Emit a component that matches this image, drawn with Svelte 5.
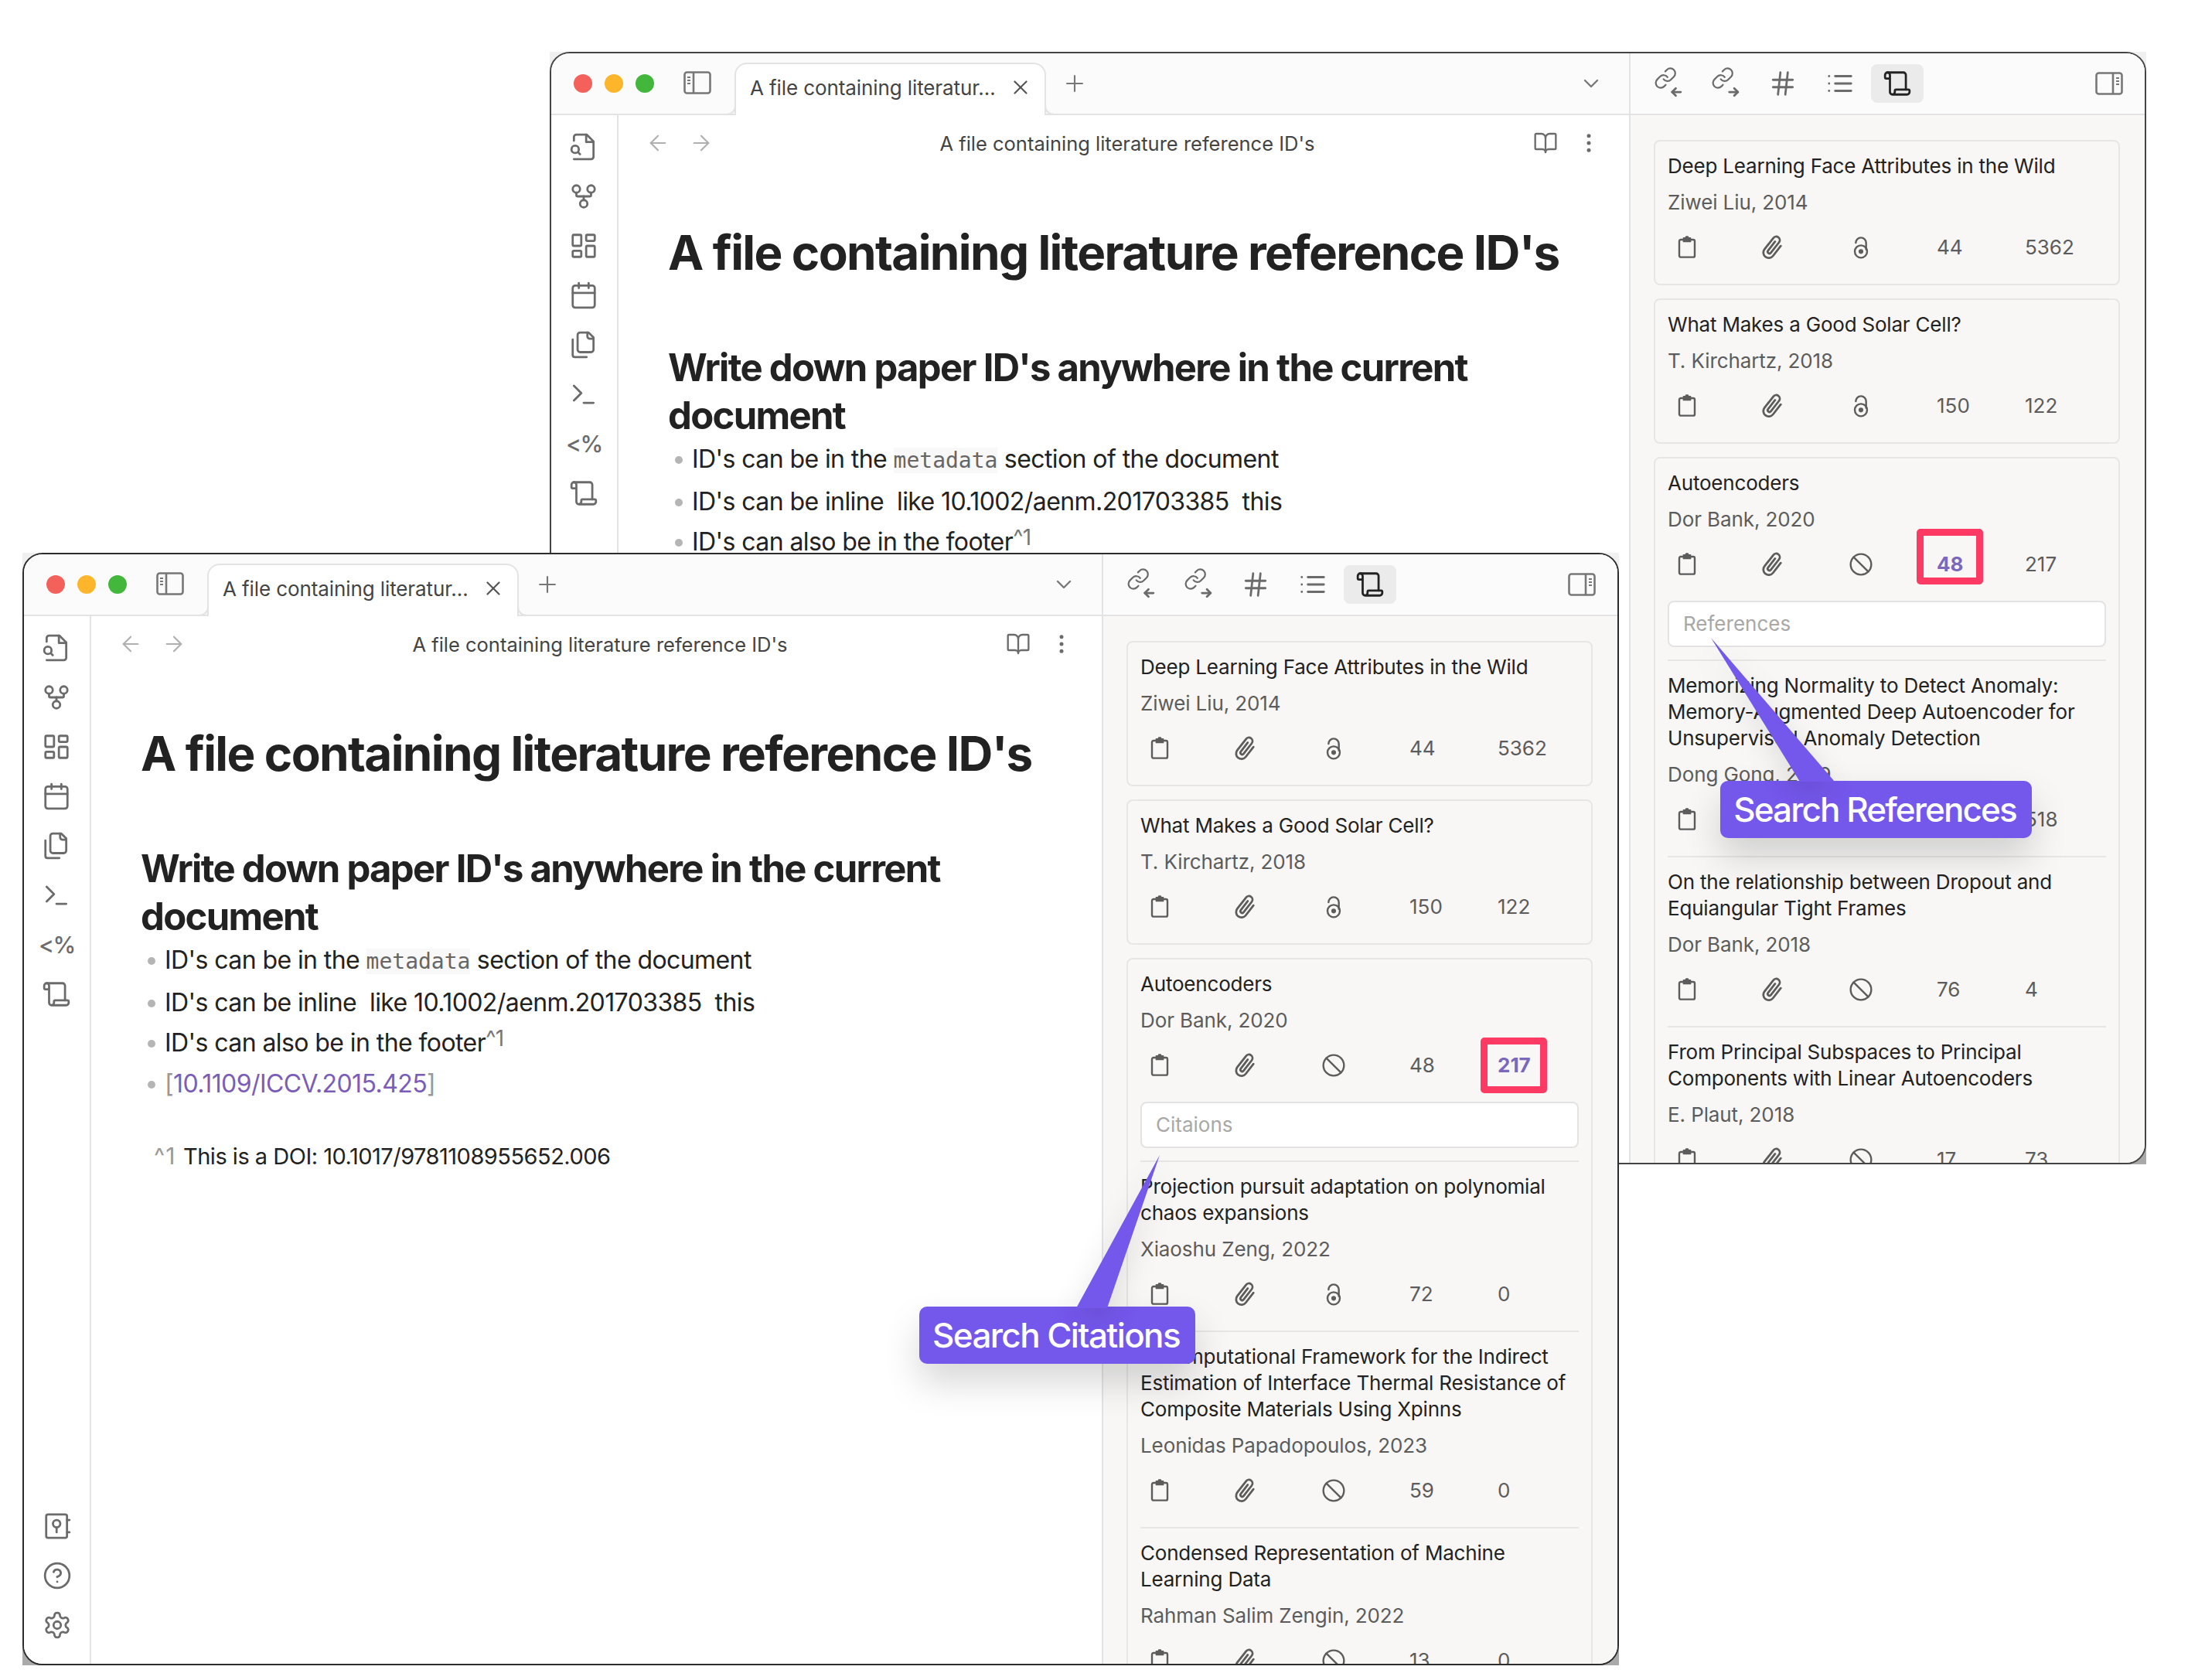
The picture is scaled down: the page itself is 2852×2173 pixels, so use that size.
<script>
  const icons = {
    fileSearch: '<path d="M4 22h14a2 2 0 0 0 2-2V7.5L14.5 2H6a2 2 0 0 0-2 2v3"/><polyline points="14 2 14 8 20 8"/><path d="m9 18-1.5-1.5"/><circle cx="5" cy="14" r="3"/>',
    fork: '<circle cx="12" cy="18" r="3"/><circle cx="6" cy="6" r="3"/><circle cx="18" cy="6" r="3"/><path d="M18 9v2c0 .6-.4 1-1 1H7c-.6 0-1-.4-1-1V9"/><path d="M12 12v3"/>',
    dash: '<rect width="7" height="9" x="3" y="3" rx="1"/><rect width="7" height="5" x="14" y="3" rx="1"/><rect width="7" height="9" x="14" y="12" rx="1"/><rect width="7" height="5" x="3" y="16" rx="1"/>',
    calendar: '<path d="M8 2v4"/><path d="M16 2v4"/><rect width="18" height="18" x="3" y="4" rx="2"/><path d="M3 10h18"/>',
    files: '<path d="M20 7h-3a2 2 0 0 1-2-2V2"/><path d="M9 18a2 2 0 0 1-2-2V4a2 2 0 0 1 2-2h7l4 4v10a2 2 0 0 1-2 2Z"/><path d="M3 7.6v12.8A1.6 1.6 0 0 0 4.6 22h9.8"/>',
    terminal: '<polyline points="4 17 10 11 4 5"/><line x1="12" x2="20" y1="19" y2="19"/>',
    scroll: '<path d="M19 17V5a2 2 0 0 0-2-2H4"/><path d="M8 21h12a2 2 0 0 0 2-2v-1a1 1 0 0 0-1-1H11a1 1 0 0 0-1 1v1a2 2 0 1 1-4 0V5a2 2 0 1 0-4 0v2a1 1 0 0 0 1 1h3"/>',
    vault: '<rect x="3" y="2.5" width="17" height="19" rx="1.5"/><circle cx="11.5" cy="10" r="3"/><path d="M11.5 13v4"/><path d="M20 7h2"/><path d="M20 17h2"/>',
    help: '<circle cx="12" cy="12" r="10"/><path d="M9.09 9a3 3 0 0 1 5.83 1c0 2-3 3-3 3"/><path d="M12 17h.01"/>',
    gear: '<path d="M12.22 2h-.44a2 2 0 0 0-2 2v.18a2 2 0 0 1-1 1.73l-.43.25a2 2 0 0 1-2 0l-.15-.08a2 2 0 0 0-2.73.73l-.22.38a2 2 0 0 0 .73 2.73l.15.1a2 2 0 0 1 1 1.72v.51a2 2 0 0 1-1 1.74l-.15.09a2 2 0 0 0-.73 2.73l.22.38a2 2 0 0 0 2.73.73l.15-.08a2 2 0 0 1 2 0l.43.25a2 2 0 0 1 1 1.73V20a2 2 0 0 0 2 2h.44a2 2 0 0 0 2-2v-.18a2 2 0 0 1 1-1.73l.43-.25a2 2 0 0 1 2 0l.15.08a2 2 0 0 0 2.73-.73l.22-.39a2 2 0 0 0-.73-2.73l-.15-.08a2 2 0 0 1-1-1.74v-.5a2 2 0 0 1 1-1.74l.15-.09a2 2 0 0 0 .73-2.73l-.22-.38a2 2 0 0 0-2.73-.73l-.15.08a2 2 0 0 1-2 0l-.43-.25a2 2 0 0 1-1-1.73V4a2 2 0 0 0-2-2z"/><circle cx="12" cy="12" r="3"/>',
    left: '<path d="M19 12H5"/><path d="m12 19-7-7 7-7"/>',
    right: '<path d="M5 12h14"/><path d="m12 5 7 7-7 7"/>',
    book: '<path d="M12 7v14"/><path d="M3 18a1 1 0 0 1-1-1V4a1 1 0 0 1 1-1h5a4 4 0 0 1 4 4 4 4 0 0 1 4-4h5a1 1 0 0 1 1 1v13a1 1 0 0 1-1 1h-6a3 3 0 0 0-3 3 3 3 0 0 0-3-3z"/>',
    dots: '<circle cx="12" cy="5" r="1"/><circle cx="12" cy="12" r="1"/><circle cx="12" cy="19" r="1"/>',
    x: '<path d="M18 6 6 18"/><path d="m6 6 12 12"/>',
    plus: '<path d="M5 12h14"/><path d="M12 5v14"/>',
    chevron: '<path d="m6 9 6 6 6-6"/>',
    hash: '<line x1="4" x2="20" y1="9" y2="9"/><line x1="4" x2="20" y1="15" y2="15"/><line x1="10" x2="8" y1="3" y2="21"/><line x1="16" x2="14" y1="3" y2="21"/>',
    list: '<line x1="8" y1="6" x2="21" y2="6"/><line x1="8" y1="12" x2="21" y2="12"/><line x1="8" y1="18" x2="21" y2="18"/><line x1="3" y1="6" x2="3.01" y2="6"/><line x1="3" y1="12" x2="3.01" y2="12"/><line x1="3" y1="18" x2="3.01" y2="18"/>',
    linkIn: '<g transform="translate(0 -2) scale(.8)"><path d="M10 13a5 5 0 0 0 7.54.54l3-3a5 5 0 0 0-7.07-7.07l-1.72 1.71"/><path d="M14 11a5 5 0 0 0-7.54-.54l-3 3a5 5 0 0 0 7.07 7.07l1.71-1.71"/></g><path d="M22 19h-7"/><path d="m18 16-3 3 3 3"/>',
    linkOut: '<g transform="translate(0 -2) scale(.8)"><path d="M10 13a5 5 0 0 0 7.54.54l3-3a5 5 0 0 0-7.07-7.07l-1.72 1.71"/><path d="M14 11a5 5 0 0 0-7.54-.54l-3 3a5 5 0 0 0 7.07 7.07l1.71-1.71"/></g><path d="M15 19h7"/><path d="m19 16 3 3-3 3"/>',
    clip: '<rect x="4.5" y="4.5" width="15" height="17" rx="1.5"/><path d="M8.5 2.8h2l.5-1.3h2l.5 1.3h2v3.7h-7z" fill="currentColor" stroke-width="1"/>',
    paper: '<g transform="rotate(38 12 12) translate(12 12) scale(1.16) translate(-12 -12)"><path d="M16.5 7v10.5a4.5 4.5 0 0 1-9 0V5.5a3 3 0 0 1 6 0v11a1.5 1.5 0 0 1-3 0V7"/></g>',
    oa: '<circle cx="12" cy="16" r="6"/><circle cx="12" cy="16" r="1.4" fill="currentColor"/><path d="M7 7.5a5 5 0 0 1 10 0V14"/>',
    ban: '<circle cx="12" cy="12" r="10"/><path d="m4.9 4.9 14.2 14.2"/>'
  };

  const ribbon = ['fileSearch', 'fork', 'dash', 'calendar', 'files', 'terminal', null, 'scroll'];

  const first = [
    { t: 'Deep Learning Face Attributes in the Wild', a: 'Ziwei Liu, 2014', i: 'oa', r: '44', c: '5362' },
    { t: 'What Makes a Good Solar Cell?', a: 'T. Kirchartz, 2018', i: 'oa', r: '150', c: '122' }
  ];

  const windows = [
    {
      id: 'back',
      hl: 'r',
      placeholder: 'References',
      third: { t: 'Autoencoders', a: 'Dor Bank, 2020', i: 'ban', r: '48', c: '217' },
      items: [
        { t: 'Memorizing Normality to Detect Anomaly: Memory-Augmented Deep Autoencoder for Unsupervised Anomaly Detection', a: 'Dong Gong, 2019', i: 'ban', r: '1', c: '518' },
        { t: 'On the relationship between Dropout and Equiangular Tight Frames', a: 'Dor Bank, 2018', i: 'ban', r: '76', c: '4' },
        { t: 'From Principal Subspaces to Principal Components with Linear Autoencoders', a: 'E. Plaut, 2018', i: 'ban', r: '17', c: '73' }
      ]
    },
    {
      id: 'front',
      hl: 'c',
      placeholder: 'Citaions',
      third: { t: 'Autoencoders', a: 'Dor Bank, 2020', i: 'ban', r: '48', c: '217' },
      items: [
        { t: 'Projection pursuit adaptation on polynomial chaos expansions', a: 'Xiaoshu Zeng, 2022', i: 'oa', r: '72', c: '0' },
        { t: 'A Computational Framework for the Indirect Estimation of Interface Thermal Resistance of Composite Materials Using Xpinns', a: 'Leonidas Papadopoulos, 2023', i: 'ban', r: '59', c: '0' },
        { t: 'Condensed Representation of Machine Learning Data', a: 'Rahman Salim Zengin, 2022', i: 'ban', r: '13', c: '0' }
      ]
    }
  ];
</script>

{#snippet icon(name, cls)}
  <svg class="ic {cls}" viewBox="0 0 24 24" fill="none" stroke="currentColor" stroke-linecap="round" stroke-linejoin="round">{@html icons[name]}</svg>
{/snippet}

{#snippet toggle(flip)}
  <svg class="toggle" class:flip viewBox="0 0 36 30" fill="none" stroke="currentColor" stroke-width="2.6" stroke-linejoin="round">
    <rect x="1.5" y="1.5" width="33" height="27" rx="3" />
    <path d="M13 1.5v27" />
    <path d="M5 8h4M5 12h4M5 16h4" stroke-width="2.2" />
  </svg>
{/snippet}

{#snippet paper(p, hl)}
  <div class="title">{p.t}</div>
  <div class="author">{p.a}</div>
  <div class="stats">
    {@render icon('clip', 'stat')}
    {@render icon('paper', 'stat')}
    {@render icon(p.i, 'stat')}
    <span class="num" class:hl={hl === 'r'}>{p.r}</span>
    <span class="num" class:hl={hl === 'c'}>{p.c}</span>
  </div>
{/snippet}

{#snippet win(w)}
  <section class="window {w.id}">
    <div class="inner">
      <div class="left">
        <header class="tabbar">
          <div class="lights"><i class="red"></i><i class="yellow"></i><i class="green"></i></div>
          {@render toggle(false)}
          <div class="tab">
            <span class="tabname">A file containing literatur…</span>
            {@render icon('x', 'tabx')}
          </div>
          {@render icon('plus', 'tabplus')}
          <span class="spacer"></span>
          {@render icon('chevron', 'chev')}
        </header>
        <div class="body">
          <nav class="ribbon">
            <div class="group">
              {#each ribbon as r}
                {#if r}
                  {@render icon(r, 'rib')}
                {:else}
                  <span class="pct">&lt;%</span>
                {/if}
              {/each}
            </div>
            <div class="group">
              {@render icon('vault', 'rib')}
              {@render icon('help', 'rib')}
              {@render icon('gear', 'rib')}
            </div>
          </nav>
          <main class="view">
            <div class="viewhead">
              {@render icon('left', 'nav')}
              {@render icon('right', 'nav')}
              <span class="viewtitle">A file containing literature reference ID's</span>
              {@render icon('book', 'act')}
              {@render icon('dots', 'act')}
            </div>
            <article class="doc">
              <h1>A file containing literature reference ID's</h1>
              <h2>Write down paper ID's anywhere in the current document</h2>
              <ul>
                <li>ID's can be in the <code>metadata</code> section of the document</li>
                <li>ID's can be inline&nbsp; like 10.1002/aenm.201703385&nbsp; this</li>
                <li>ID's can also be in the footer<sup>^1</sup></li>
                <li><span class="br">[</span><span class="link">10.1109/ICCV.2015.425</span><span class="br">]</span></li>
              </ul>
              <p class="foot"><span class="mark">^1</span> This is a DOI: 10.1017/9781108955652.006</p>
            </article>
          </main>
        </div>
      </div>
      <aside class="panel">
        <header class="panelhead">
          {@render icon('linkIn', 'ph')}
          {@render icon('linkOut', 'ph')}
          {@render icon('hash', 'ph')}
          {@render icon('list', 'ph')}
          <span class="active">{@render icon('scroll', 'ph on')}</span>
          <span class="spacer"></span>
          {@render toggle(true)}
        </header>
        <div class="panelbody">
          {#each first as p}
            <div class="card"><div class="item">{@render paper(p, '')}</div></div>
          {/each}
          <div class="card">
            <div class="item">
              {@render paper(w.third, w.hl)}
              <div class="search">{w.placeholder}</div>
            </div>
            {#each w.items as p}
              <div class="item rule">{@render paper(p, '')}</div>
            {/each}
          </div>
        </div>
      </aside>
    </div>
  </section>
{/snippet}

<div class="stage">
  {#each windows as w}
    {@render win(w)}
  {/each}

  <div class="callout refs">
    <svg class="tail" viewBox="0 0 170 190"><polygon points="5,0 120,186 165,186" /></svg>
    <span>Search References</span>
  </div>
  <div class="callout cits">
    <svg class="tail" viewBox="0 0 115 202"><polygon points="110,2 2,200 42,200" /></svg>
    <span>Search Citations</span>
  </div>
</div>

<style>
  :global(body) { margin: 0; background: #fff; }
  .stage {
    position: relative;
    width: 2852px;
    height: 2173px;
    overflow: hidden;
    background: #fff;
    font-family: Inter, "Liberation Sans", sans-serif;
    color: #222;
  }
  .window {
    position: absolute;
    width: 2065px;
    height: 1439px;
    background: linear-gradient(#f0f0f0, #a9a9a9);
  }
  .back { left: 711px; top: 67px; }
  .front { left: 29px; top: 715px; }
  .inner {
    box-sizing: border-box;
    height: 100%;
    display: grid;
    grid-template-columns: 1394px 1fr;
    grid-template-rows: minmax(0, 1fr);
    border: 2px solid #444;
    border-radius: 26px;
    overflow: hidden;
    background: #fff;
  }
  .front .inner { border-color: #2c2c2c; }

  .left { display: flex; flex-direction: column; min-width: 0; min-height: 0; }
  .tabbar {
    box-sizing: border-box;
    height: 80px;
    flex: none;
    display: flex;
    align-items: center;
    background: #fbfbfb;
    border-bottom: 2px solid #e3e3e3;
    color: #666;
    padding-left: 29px;
  }
  .lights { display: flex; gap: 16px; }
  .lights i { display: block; width: 24px; height: 24px; border-radius: 50%; }
  .red { background: #f4605a; }
  .yellow { background: #fdb62b; }
  .green { background: #43b63c; }
  .toggle { width: 36px; height: 30px; color: #777; flex: none; margin-left: 38px; margin-top: -2px; }
  .toggle.flip { transform: scaleX(-1); margin: 0; }
  .tab {
    position: relative;
    box-sizing: border-box;
    width: 403px;
    height: 68px;
    margin: 12px 0 -2px 30px;
    align-self: flex-end;
    display: flex;
    align-items: center;
    padding: 0 18px 6px 18px;
    background: #fff;
    border: 2px solid #e3e3e3;
    border-bottom: 0;
    border-radius: 16px 16px 0 0;
    color: #444;
  }
  .tab::before, .tab::after {
    content: "";
    position: absolute;
    bottom: 0;
    width: 12px;
    height: 12px;
    border-bottom: 2px solid #e3e3e3;
  }
  .tab::before { left: -14px; border-right: 2px solid #e3e3e3; border-bottom-right-radius: 12px; background: #fbfbfb; }
  .tab::after { right: -14px; border-left: 2px solid #e3e3e3; border-bottom-left-radius: 12px; background: #fbfbfb; }
  .tabname { font-size: 26px; white-space: nowrap; flex: 1; letter-spacing: -0.1px; }
  .ic { display: block; flex: none; stroke-width: 1.75; overflow: visible; }
  .ic.tabx { width: 30px; height: 30px; color: #555; margin-right: -2px; }
  .ic.tabplus { width: 34px; height: 34px; margin-left: 20px; color: #777; stroke-width: 1.5; }
  .spacer { flex: 1; }
  .ic.chev { width: 32px; height: 32px; margin-right: 33px; color: #777; }

  .body { flex: 1; display: flex; min-height: 0; background: #fff; }
  .ribbon {
    box-sizing: border-box;
    width: 87px;
    flex: none;
    border-right: 2px solid #e3e3e3;
    display: flex;
    flex-direction: column;
    justify-content: space-between;
    align-items: center;
    padding: 22px 0 31px;
    color: #6b6b6b;
  }
  .group { display: flex; flex-direction: column; align-items: center; gap: 26px; }
  .ic.rib { width: 38px; height: 38px; }
  .pct { height: 38px; line-height: 38px; font-size: 30px; font-weight: 500; letter-spacing: -1.5px; color: #6b6b6b; }

  .view { flex: 1; min-width: 0; }
  .viewhead {
    height: 72px;
    display: flex;
    align-items: center;
    padding: 0 36px 0 35px;
    color: #aaa;
    gap: 24px;
  }
  .ic.nav { width: 32px; height: 32px; color: #b0b0b0; stroke-width: 1.6; }
  .viewtitle { flex: 1; text-align: center; padding-left: 10px; font-size: 25.5px; color: #444; white-space: nowrap; }
  .ic.act { width: 32px; height: 32px; color: #6b6b6b; }
  .doc { padding-left: 64px; width: 1190px; }
  h1 {
    margin: 64px 0 0;
    font-size: 62px;
    line-height: 84px;
    font-weight: 700;
    letter-spacing: -1.65px;
    color: #222;
    white-space: nowrap;
  }
  h2 {
    margin: 76px 0 0;
    font-size: 49px;
    line-height: 62px;
    font-weight: 700;
    letter-spacing: -1.7px;
    color: #222;
  }
  ul { list-style: none; margin: -1px 0 0; padding: 0 0 0 31px; }
  li { position: relative; font-size: 32px; line-height: 52.6px; letter-spacing: -0.58px; color: #222; white-space: nowrap; }
  li::before {
    content: "";
    position: absolute;
    left: -22px;
    top: 22px;
    width: 10px;
    height: 10px;
    border-radius: 50%;
    background: #b5b5b5;
  }
  code {
    font-family: "DejaVu Sans Mono", "Liberation Mono", monospace;
    font-size: 28px;
    letter-spacing: 0;
    color: #666;
    background: #f8f8f8;
  }
  sup { font-size: 28px; line-height: 0; color: #777; vertical-align: 7px; }
  .br { color: #999; }
  .link { color: #7a5db8; }
  .foot { margin: 41px 0 0 17px; font-size: 29px; line-height: 53px; letter-spacing: -0.5px; color: #222; }
  .mark { color: #999; font-size: 30px; letter-spacing: 1px; margin-right: 2px; }

  .panel {
    min-width: 0;
    min-height: 0;
    display: flex;
    flex-direction: column;
    border-left: 2px solid #e3e3e3;
    background: #f8f7f6;
  }
  .panelhead {
    box-sizing: border-box;
    height: 80px;
    flex: none;
    display: flex;
    align-items: center;
    background: #fbfbfb;
    border-bottom: 2px solid #e3e3e3;
    padding: 0 28px 0 30px;
    gap: 36px;
    color: #6b6b6b;
  }
  .ic.ph { width: 38px; height: 38px; }
  .active {
    width: 68px;
    height: 50px;
    margin: 0 -15px;
    border-radius: 8px;
    background: #ebebeb;
    display: flex;
    align-items: center;
    justify-content: center;
    color: #222;
  }
  .panelbody { flex: 1; min-height: 0; overflow: hidden; padding: 32px 30px 0; }
  .card {
    box-sizing: border-box;
    width: 603px;
    border: 2px solid #e6e6e6;
    border-radius: 8px;
    margin-bottom: 17px;
  }
  .item { margin: 0 16px; padding: 15px 0 0; }
  .item.rule { border-top: 2px solid #e6e6e6; margin-top: 0; }
  .title { font-size: 26px; line-height: 34px; color: #222; letter-spacing: -0.2px; }
  .author { margin-top: 13px; font-size: 26px; line-height: 34px; color: #5c5c5c; letter-spacing: -0.1px; }
  .stats {
    display: grid;
    grid-template-columns: 111px repeat(4, 114px);
    align-items: center;
    height: 40px;
    margin: 21px 0 27px 9px;
    color: #5c5c5c;
  }
  .ic.stat { width: 32px; height: 32px; stroke-width: 1.8; }
  .num { position: relative; font-size: 26px; line-height: 40px; justify-self: start; color: #5c5c5c; }
  .num.hl { font-weight: 700; color: #7a68bd; }
  .num.hl::after {
    content: "";
    position: absolute;
    left: 50%;
    top: 50%;
    box-sizing: border-box;
    width: 86px;
    height: 72px;
    transform: translate(-50%, -50%);
    border: 9px solid #fd3a63;
    border-radius: 5px;
  }
  .back .num.hl::after { top: calc(50% - 10px); }
  .search {
    box-sizing: border-box;
    height: 60px;
    margin-bottom: 16px;
    padding-left: 18px;
    border: 2px solid #e3e3e3;
    border-radius: 8px;
    background: #fff;
    font-size: 26px;
    line-height: 56px;
    color: #a8a8a8;
  }

  .callout {
    position: absolute;
    box-sizing: border-box;
    display: flex;
    align-items: center;
    justify-content: center;
    border-radius: 10px;
    background: #7457eb;
    color: #fff;
    font-size: 44px;
    font-weight: 500;
    letter-spacing: -1.9px;
    white-space: nowrap;
    box-shadow: 0 24px 48px rgba(0, 0, 0, .16);
  }
  .callout span { position: relative; }
  .refs { left: 2225px; top: 1010px; width: 403px; height: 74px; padding-right: 3px; }
  .cits { left: 1189px; top: 1690px; width: 357px; height: 74px; padding-right: 3px; letter-spacing: -1.6px; }
  .tail { position: absolute; fill: #7457eb; overflow: visible; filter: drop-shadow(0 12px 18px rgba(0, 0, 0, .12)); }
  .refs .tail { left: -17px; top: -185px; width: 170px; height: 190px; }
  .cits .tail { left: 201px; top: -198px; width: 115px; height: 202px; }
</style>
